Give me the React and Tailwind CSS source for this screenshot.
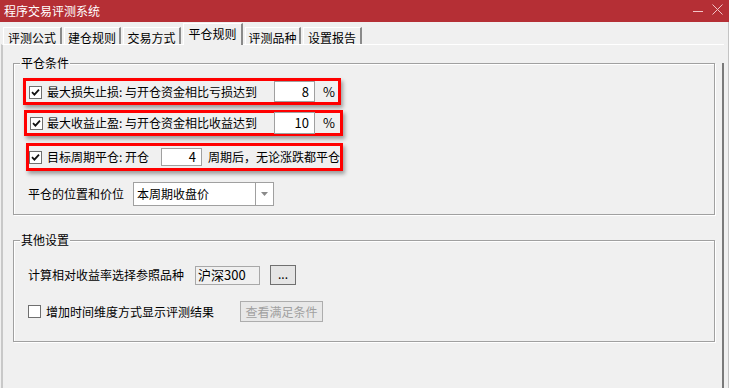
import React from "react"

const font = { fontFamily: '"Noto Sans CJK SC", "Microsoft YaHei", sans-serif' }

function Check({ checked }) {
  return (
    <span className="inline-flex h-[13px] w-[13px] shrink-0 items-center justify-center border border-[#6f6f6f] bg-white">
      {checked && (
        <svg width="9" height="9" viewBox="0 0 9 9">
          <path d="M1 4.2 L3.4 6.6 L8 1.6" fill="none" stroke="#111" strokeWidth="1.8" />
        </svg>
      )}
    </span>
  )
}

function NumBox({ value, h = "h-[21px]" }) {
  return (
    <span className={`inline-flex w-[41px] ${h} shrink-0 items-center justify-end border border-[#a0a0a0] bg-white pr-[5px] text-[13px] text-black`}>
      {value}
    </span>
  )
}

function Tab({ label, active, w }) {
  if (active)
    return (
      <div className={`relative z-10 -mb-[1px] mt-[1px] flex h-[22px] ${w} items-center justify-center border-l border-t border-r-2 border-l-white border-t-white border-r-[#8a8a8a] bg-[#f0f0f0] pb-[2px] text-[12px] text-black`}>
        {label}
      </div>
    )
  return (
    <div className={`mt-[5px] flex h-[17px] ${w} items-center justify-center border-l border-t border-r-2 border-l-white border-t-white border-r-[#8a8a8a] bg-[#f0f0f0] pt-[3px] text-[12px] text-black`}>
      {label}
    </div>
  )
}

function Group({ label, className, children }) {
  return (
    <div className={`relative ml-[10px] w-[702px] border border-[#a0a0a0] shadow-[inset_1px_1px_0_#fff,1px_1px_0_#fff] ${className}`}>
      <span className="absolute -top-[10px] left-[6px] bg-[#f0f0f0] px-[1px] text-[12px] leading-[18px] text-black">{label}</span>
      {children}
    </div>
  )
}

export default function App() {
  return (
    <div className="relative h-[388px] w-[729px] overflow-hidden bg-[#f0f0f0] text-black" style={font}>
      {/* title bar */}
      <div className="flex h-[22px] items-center bg-[#b52f35] pl-[4px] pr-[6px] text-white">
        <span className="text-[12px] leading-none">程序交易评测系统</span>
        <div className="ml-auto flex items-center gap-[9px]">
          <span className="mt-[1px] block h-[1px] w-[10px] bg-[#f2c4c6]" />
          <svg width="11" height="11" viewBox="0 0 11 11" className="-mt-[4px]">
            <path d="M0.5 0.5 L10.5 10.5 M10.5 0.5 L0.5 10.5" stroke="#f2c4c6" strokeWidth="1" />
          </svg>
        </div>
      </div>

      <div className="h-[366px] border-r border-[#c4c4c4]">
        {/* tabs */}
        <div className="flex h-[22px] items-start gap-[2px] pl-[3px]">
          <Tab label="评测公式" w="w-[59px]" />
          <Tab label="建仓规则" w="w-[57px]" />
          <Tab label="交易方式" w="w-[58px]" />
          <Tab label="平仓规则" active w="w-[60px]" />
          <Tab label="评测品种" w="w-[56px]" />
          <Tab label="设置报告" w="w-[59px]" />
        </div>

        {/* panel */}
        <div className="ml-[1px] h-[344px] w-[723px] border-l-2 border-t border-l-[#c8c8c8] border-t-white pt-[18px]">
          <div className="h-[326px] border-r-2 border-[#7a7a7a]">
            <Group label="平仓条件" className="h-[152px] pt-[14px]">
              <div className="ml-[9px] flex h-[27px] w-[318px] items-center border-[3px] border-[#ff0000] shadow-[2px_3px_4px_rgba(0,0,0,0.35)] text-[12px]">
                <span className="ml-[3px]"><Check checked /></span>
                <span className="ml-[5px] w-[227px] whitespace-nowrap">最大损失止损: 与开仓资金相比亏损达到</span>
                <NumBox value="8" />
                <span className="ml-[8px] text-[13px]">%</span>
              </div>
              <div className="ml-[10px] mt-[5px] flex h-[26px] w-[319px] items-center border-[3px] border-[#ff0000] shadow-[2px_3px_4px_rgba(0,0,0,0.35)] text-[12px]">
                <span className="ml-[3px]"><Check checked /></span>
                <span className="ml-[4px] w-[227px] whitespace-nowrap">最大收益止盈: 与开仓资金相比收益达到</span>
                <NumBox value="10" h="h-[22px]" />
                <span className="ml-[8px] text-[13px]">%</span>
              </div>
              <div className="ml-[12px] mt-[7px] flex h-[28px] w-[317px] items-center border-[3px] border-[#ff0000] shadow-[2px_3px_4px_rgba(0,0,0,0.35)] text-[12px]">
                <span className="ml-0"><Check checked /></span>
                <span className="ml-[5px] w-[116px] whitespace-nowrap">目标周期平仓: 开仓</span>
                <NumBox value="4" h="h-[18px]" />
                <span className="ml-[6px] whitespace-nowrap">周期后，无论涨跌都平仓</span>
              </div>
              <div className="ml-[14px] mt-[11px] flex items-center text-[12px]">
                <span className="w-[105px]">平仓的位置和价位</span>
                <div className="flex h-[24px] w-[141px] items-center border border-[#a0a0a0] bg-white">
                  <span className="flex-1 pl-[3px] text-[12px]">本周期收盘价</span>
                  <span className="flex h-full w-[18px] items-center justify-center border-l border-[#a0a0a0]">
                    <svg width="7" height="4" viewBox="0 0 7 4"><path d="M0 0 H7 L3.5 4 Z" fill="#8a8a8a" /></svg>
                  </span>
                </div>
              </div>
            </Group>

            <Group label="其他设置" className="mt-[25px] h-[102px] pt-[24px]">
              <div className="ml-[14px] flex items-center text-[12px]">
                <span className="w-[167px]">计算相对收益率选择参照品种</span>
                <span className="flex h-[19px] w-[65px] items-center border border-[#a8a8a8] bg-[#f0f0f0] pl-[2px] text-[13px]">沪深300</span>
                <span className="ml-[10px] flex h-[20px] w-[26px] items-center justify-center border border-[#707070] bg-[#e5e5e5] pb-[3px] text-[12px]">...</span>
              </div>
              <div className="ml-[14px] mt-[16px] flex items-center text-[12px]">
                <Check />
                <span className="ml-[5px] w-[194px] whitespace-nowrap">增加时间维度方式显示评测结果</span>
                <span className="flex h-[21px] w-[83px] items-center justify-center border border-[#adadad] bg-[#e8e8e8] text-[12px] text-[#a0a0a0]">查看满足条件</span>
              </div>
            </Group>
          </div>
        </div>
      </div>
    </div>
  )
}
